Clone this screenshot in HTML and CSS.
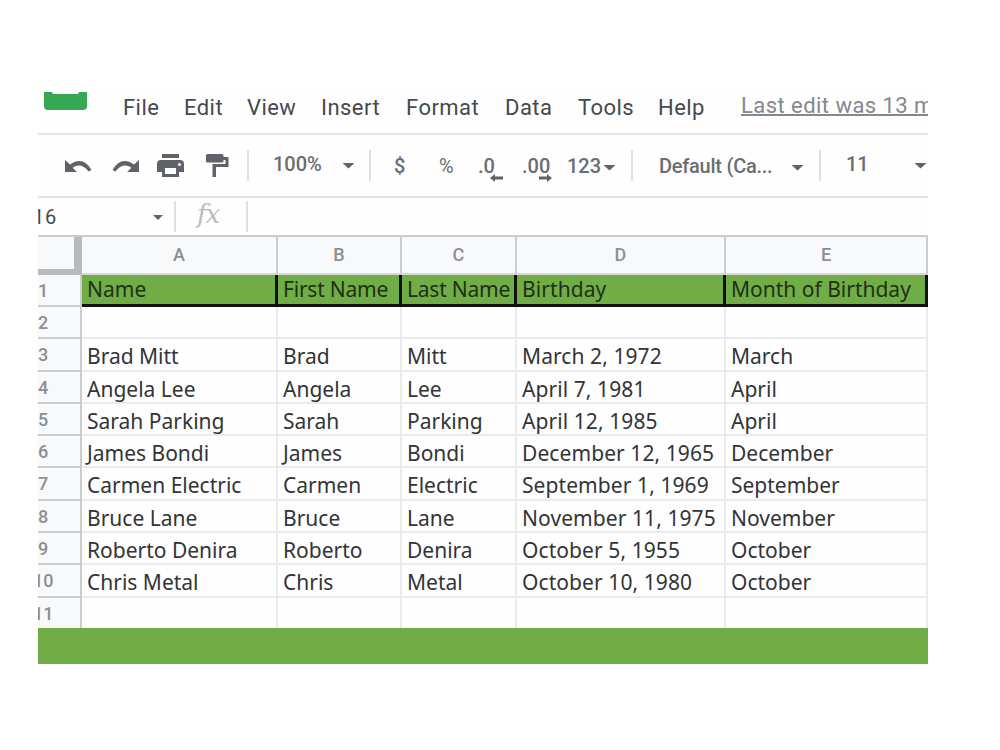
FILE: index.html
```html
<!DOCTYPE html>
<html lang="en">
<head>
<meta charset="utf-8">
<title>Birthdays</title>
<link rel="stylesheet" href="styles.css">
</head>
<body>
<main class="window">
  <nav class="menu">
    <svg class="logo" width="44" height="19" viewBox="0 0 44 19"><path d="M0 0H8Q8 2 10 2H33Q35 2 35 0H43V14Q43 18 39 18H4Q0 18 0 14Z" fill="#34a853"/></svg>
    <span>File</span><span>Edit</span><span>View</span><span>Insert</span><span>Format</span><span>Data</span><span>Tools</span><span>Help</span><span class="last-edit">Last edit was 13 m</span>
  </nav>
  <div class="toolbar">
    <svg width="28" height="14" viewBox="0 0 28 14"><path d="M0 1V13H12L7.6 8.7Q16 3 23.5 12.5L26.5 11Q18 -3.5 5 5.5Z"/></svg>
    <svg width="28" height="14" viewBox="0 0 28 14"><path d="M27 1V13H15L19.4 8.7Q11 3 3.5 12.5L.5 11Q9 -3.5 22 5.5Z"/></svg>
    <svg class="print" width="27" height="24" viewBox="0 0 27 24"><path fill-rule="evenodd" d="M5 0H22V4H5ZM4 6H23Q27 6 27 10V18H22V23H5V18H0V10Q0 6 4 6ZM8 14V20H19V14ZM22.5 9A1.5 1.5 0 1 0 22.5 12A1.5 1.5 0 1 0 22.5 9Z"/></svg>
    <svg class="paint" width="23" height="24" viewBox="0 0 23 24"><path d="M1.500 0H16Q17.500 0 17.500 1.500V3H22.500V13H10V23H6.500V10H19.500V6H17.500V7Q17.500 8.500 16 8.500H1.500Q0 8.500 0 7V1.500Q0 0 1.500 0Z"/></svg>
    <i class="bar"></i>
    <span class="zoom">100%</span><i class="caret"></i><i class="bar"></i>
    <span>$</span><span class="percent">%</span>
    <span class="decimal">.0<svg width="13" height="8" viewBox="0 0 13 8"><path d="M0 4L5 0V2.600H13V5.400H5V8Z"/></svg></span>
    <span class="decimal">.00<svg width="13" height="8" viewBox="0 0 13 8"><path d="M13 4L8 0V2.600H0V5.400H8V8Z"/></svg></span>
    <span>123</span><i class="caret low"></i><i class="bar"></i>
    <span class="font">Default (Ca...</span><i class="caret low"></i><i class="bar"></i>
    <span class="zoom">11</span><i class="caret"></i>
  </div>
  <div class="formula"><span class="ref">16</span><i class="caret small"></i><i class="bar"></i><span class="fx">fx</span><i class="bar"></i></div>
  <section class="sheet">
    <div class="row letters"><b class="corner"></b><b>A</b><b>B</b><b>C</b><b>D</b><b>E</b></div>
    <div class="row titles"><b>1</b><span>Name</span><span>First Name</span><span>Last Name</span><span>Birthday</span><span>Month of Birthday</span></div>
    <div class="row"><b>2</b><span></span><span></span><span></span><span></span><span></span></div>
    <div class="row"><b>3</b><span>Brad Mitt</span><span>Brad</span><span>Mitt</span><span>March 2, 1972</span><span>March</span></div>
    <div class="row"><b>4</b><span>Angela Lee</span><span>Angela</span><span>Lee</span><span>April 7, 1981</span><span>April</span></div>
    <div class="row"><b>5</b><span>Sarah Parking</span><span>Sarah</span><span>Parking</span><span>April 12, 1985</span><span>April</span></div>
    <div class="row"><b>6</b><span>James Bondi</span><span>James</span><span>Bondi</span><span>December 12, 1965</span><span>December</span></div>
    <div class="row"><b>7</b><span>Carmen Electric</span><span>Carmen</span><span>Electric</span><span>September 1, 1969</span><span>September</span></div>
    <div class="row"><b>8</b><span>Bruce Lane</span><span>Bruce</span><span>Lane</span><span>November 11, 1975</span><span>November</span></div>
    <div class="row"><b>9</b><span>Roberto Denira</span><span>Roberto</span><span>Denira</span><span>October 5, 1955</span><span>October</span></div>
    <div class="row"><b class="cut">10</b><span>Chris Metal</span><span>Chris</span><span>Metal</span><span>October 10, 1980</span><span>October</span></div>
    <div class="row last"><b class="cut">11</b><span></span><span></span><span></span><span></span><span></span></div>
  </section>
  <div class="footer"></div>
</main>
</body>
</html>
```
FILE: styles.css
```css
* { box-sizing: border-box; }
body { margin: 0; background: #fff; font-family: Roboto, "Liberation Sans", sans-serif; }
.window { width: 890px; margin: 92px 0 0 38px; overflow: hidden; background: #fefefe; }
.menu { display: grid; grid-template-columns: 79px 61px 63px 74px 85px 99px 73px 80px 83px 187px; height: 43px; padding-left: 6px; border-bottom: 2px solid #e2e3e5; font-size: 22px; line-height: 31px; color: #46494d; white-space: nowrap; letter-spacing: .45px; }
.last-edit { line-height: 28px; color: #85888c; text-decoration: underline; text-decoration-thickness: 2px; text-underline-offset: 1px; text-decoration-skip-ink: none; }
.toolbar { display: grid; grid-template-columns: 47px 45px 49px 41px 26px 69px 27px 25px 45px 39px 44px 45px 36px 28px 28px 132px 28px 27px 68px 14px; height: 63px; padding-left: 27px; align-items: center; border-bottom: 2px solid #e2e3e5; font-size: 20px; font-weight: 500; color: #6a6d72; white-space: nowrap; fill: #5f6368; }
.toolbar span { line-height: 24px; margin-top: 0; }
.toolbar .zoom { margin-top: -4px; }
.toolbar .percent { font-weight: 400; }
.toolbar .font { letter-spacing: -.25px; }
.toolbar .print, .toolbar .paint { margin-top: 1px; }
.caret { width: 13px; height: 6px; background: #5f6368; clip-path: polygon(0 0, 100% 0, 50% 100%); }
.caret.low { margin-top: 4px; }
.caret.small { width: 10px; height: 5px; margin-top: 2px; }
.bar { width: 2px; height: 31px; background: #dfe0e2; }
.decimal { position: relative; }
.decimal svg { position: absolute; left: 12px; top: 20px; }
.decimal + .decimal svg { left: 17px; }
.formula { display: grid; grid-template-columns: 115px 21px 23px 49px 4px; align-items: center; height: 37px; font-size: 20px; color: #46494d; }
.ref { margin-left: -5px; letter-spacing: .8px; }
.fx { margin-top: -6px; font: italic 26px/32px "DejaVu Serif", serif; letter-spacing: -1px; color: #bbbcbe; }
.sheet { border-top: 2px solid #cbcccd; }
.row { display: grid; grid-template-columns: 44px 196px 124px 115px 209px 202px; height: 32.3px; font-family: "Noto Sans", sans-serif; font-size: 21px; line-height: 35px; color: #333437; }
.row > * { overflow: hidden; border-right: 2px solid #e9eaeb; border-bottom: 2px solid #e9eaeb; white-space: nowrap; }
.row > span { padding-left: 5px; }
.row > span:nth-child(5) { letter-spacing: .08px; }
.row > b { background: #f8f9fa; border-color: #cbcccd; font: 500 18px/32px Roboto, sans-serif; color: #8c8f93; }
.row > .cut { text-indent: -5px; }
.letters { height: 38px; }
.letters > b { line-height: 35px; text-align: center; border-bottom-color: #d8d9da; }
.letters > .corner { border-right: 8px solid #b8b9ba; border-bottom: 6px solid #b8b9ba; }
.titles { height: 32px; line-height: 29px; }
.titles > span { background: #70ad47; border-right: 3px solid #111; border-bottom: 3px solid #111; color: #1f3016; }
.titles > span:nth-child(3), .titles > span:nth-child(4) { letter-spacing: -.22px; }
.last { height: 30.500px; }
.last > * { border-bottom: 0; }
.footer { height: 36px; background: #70ad47; }
```
